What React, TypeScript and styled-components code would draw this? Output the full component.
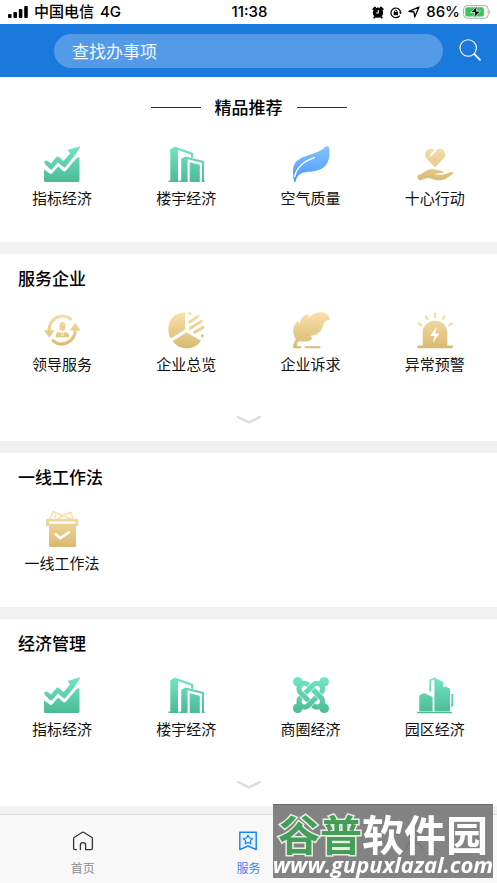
import React, { useId } from "react";
import styled, { createGlobalStyle } from "styled-components";
import { FaJoomla } from "react-icons/fa";

const GlobalStyle = createGlobalStyle`
  * { box-sizing: border-box; }
  body {
    margin: 0;
    background: #f1f1f1;
    color: #000;
    font-family: "Noto Sans CJK SC", sans-serif;
  }
  button, input { font: inherit; }
  button { border: 0; padding: 0; background: none; cursor: pointer; }
`;

const Page = styled.div`
  min-height: 100vh;
  display: flex;
  flex-direction: column;
`;

/* ---------- status bar ---------- */

const StatusBar = styled.div`
  height: 24px;
  padding: 0 6px 0 8px;
  display: grid;
  grid-template-columns: 1fr auto 1fr;
  align-items: center;
  background: #fff;
  font: 500 15px/24px Inter, "Noto Sans CJK SC", sans-serif;
`;

const StatusGroup = styled.div<{ $end?: boolean }>`
  display: flex;
  align-items: center;
  justify-content: ${(p) => (p.$end ? "flex-end" : "flex-start")};
  gap: 6px;
  white-space: nowrap;
`;

const Reading = styled.span`
  display: flex;
  align-items: center;
  gap: 3px;
`;

/* ---------- header ---------- */

const Header = styled.header`
  height: 53px;
  padding: 0 16px 0 54px;
  display: flex;
  align-items: center;
  gap: 16px;
  background: #1a79dc;
`;

const SearchInput = styled.input`
  flex: 1;
  min-width: 0;
  height: 34px;
  padding: 0 18px;
  border: 0;
  border-radius: 17px;
  outline: 0;
  background: #539be7;
  color: #fff;
  font-size: 17px;
  &::placeholder { color: #f1f7fd; opacity: 1; }
`;

const SearchButton = styled.button`
  width: 22px;
  height: 24px;
  color: #fff;
  svg { display: block; }
`;

/* ---------- sections ---------- */

const Main = styled.main`
  flex: 1;
  display: flex;
  flex-direction: column;
  gap: 12px;
`;

const Section = styled.section<{ $featured?: boolean }>`
  padding: ${(p) => (p.$featured ? "18px 0 33px" : "12px 0 33px")};
  background: #fff;
`;

const Title = styled.h2`
  margin: 0;
  padding: 0 18px;
  font-size: 17px;
  line-height: 24px;
  font-weight: 500;
`;

const FeaturedTitle = styled(Title)`
  display: flex;
  justify-content: center;
  align-items: center;
  gap: 14px;
  &::before, &::after {
    content: "";
    width: 50px;
    height: 1px;
    background: #333;
  }
`;

const Grid = styled.div<{ $featured?: boolean }>`
  margin-top: ${(p) => (p.$featured ? "27px" : "22px")};
  display: grid;
  grid-template-columns: repeat(4, 1fr);
`;

const Entry = styled.button`
  display: flex;
  flex-direction: column;
  align-items: center;
  gap: 5px;
  color: #111;
  font-size: 15px;
  line-height: 22px;
`;

const Art = styled.svg`
  width: 36px;
  height: 36px;
  display: block;
  overflow: visible;
`;

const MoreButton = styled.button`
  width: 48px;
  height: 22px;
  margin: 34px auto -23px;
  display: flex;
  align-items: center;
  justify-content: center;
`;

/* ---------- tab bar ---------- */

const TabBar = styled.nav`
  height: 69px;
  margin-top: 8px;
  position: sticky;
  bottom: 0;
  display: grid;
  grid-template-columns: repeat(3, 1fr);
  border-top: 1px solid #d9d9d9;
  background: #f8f8f8;
`;

const Tab = styled.a<{ $active?: boolean }>`
  padding-top: 16px;
  display: flex;
  flex-direction: column;
  align-items: center;
  gap: 8px;
  color: ${(p) => (p.$active ? "#3f83ee" : "#8c8c8c")};
  font-size: 12px;
  line-height: 18px;
  text-decoration: none;
`;

const Watermark = styled.div`
  position: fixed;
  right: 4px;
  bottom: 5px;
  width: 220px;
  height: 74px;
  padding-top: 10px;
  display: flex;
  flex-direction: column;
  align-items: center;
  border-top: 1px solid #6c6c6c;
  background: rgba(122, 122, 122, 0.93);
  color: #fff;
  white-space: nowrap;
  pointer-events: none;
`;

const Brand = styled.div`
  font-size: 42px;
  line-height: 36px;
  font-weight: 700;
`;

const BrandAccent = styled.span`
  color: #459d57;
  -webkit-text-stroke: 3px #e4eee4;
  paint-order: stroke fill;
`;

const Site = styled.div`
  font: italic 700 22px/26px "Open Sans", sans-serif;
`;

/* ---------- icons ---------- */

const tones = {
  green: ["#72e6c5", "#4dba95"],
  gold: ["#fae0ab", "#d7ba70"],
  blue: ["#86c3ff", "#4899fc"],
};
type Tone = keyof typeof tones;

const drawings = {
  chart: (g: string) => (
    <g fill={g}>
      <path d="M.6 17.8Q-.5 16 1.2 14.8Q2.5 14 4 15.2L7 17.6L12.2 11.2Q13.5 9.8 15 11.1L19.6 15L26.2 7.2L24.2 5Q23.5 4 24.8 3.6L35.2.4Q36.5.2 36 1.4L30.2 10.2L21.6 20.8Q20.6 22 19.4 21L14 16.4L8.2 23Q7.2 24 6 23Z" />
      <path d="M0 23.6L5.8 27.6Q7.2 28.4 8.2 27.2L14.2 20.4L19.2 25Q20.6 26.2 21.8 24.8L32.5 12.2Q34.8 10 35.5 12.5V34.5Q35.5 36 34 36H1.5Q0 36 0 34.5Z" />
    </g>
  ),
  towers: (g: string) => (
    <g fill={g}>
      <path d="M2.3 3.2L7 .6L25 7V12L23 11.4V8.6L10 4V34.5H10.8V36H.5V34.5H2.3Z" />
      <path fillRule="evenodd" d="M13.2 12.8L17.5 10.4L36 15V34.5H36.6V36H11.5V34.5H13.2ZM19.6 15V36H21.7V16.2L31.7 18.7V36H34V16.8L19.6 13.2Z" />
      <path d="M22 18L31.5 20.2V23.4L22 21ZM22 23.4L31.5 25.4V28.5L22 26.4ZM22 28.8L31.5 30.2V32.6L22 31.5ZM22 33.5L31.5 34.2V36H22Z" />
    </g>
  ),
  leaf: (g: string) => (
    <>
      <path fill={g} d="M34 .2Q36.5-.2 36.5 5.5C36.8 16 33 22 24 24.6C18 26.3 12 25.5 8 27.6C4 30 3.5 32.5 2.6 35.6Q1.8 36.8 1 35.4C.8 33-.2 29 0 24C.3 17.5 4.5 13.2 11 10.8C17 8.6 27 6 31 2Q32.5.5 34 .2Z" />
      <path d="M1.6 30.5Q5 17 21.5 11.6" fill="none" stroke="#fff" strokeWidth="1.4" strokeLinecap="round" />
    </>
  ),
  heart: (g: string) => (
    <>
      <g fill={g}>
        <path d="M18 21.3L9.8 12.8C7.5 10 7.5 6.4 9.8 4.4C12.4 2.1 15.7 2.4 18 5C20.3 2.4 24 2.1 26.5 4.4C28.8 6.6 28.6 10 26.3 12.8Z" />
        <path d="M.3 29.6Q4 28.5 7.5 25.8Q12 22.2 17 23.3L25 25.1Q26.8 25.8 26.4 27.3L20 27.8Q25.5 29.8 30 27.6Q33.5 25.4 35.8 26.2Q36.8 27 35.5 28.2L28.5 33Q24.5 34.8 19 34C15 33.4 13 31.6 9.5 32.2L3 34.5Q0 33 .3 29.6Z" />
      </g>
      <path d="M13.8 9.2L18.4 4.6" stroke="#fff" strokeWidth="2" strokeLinecap="round" />
      <path d="M18.8 28.2L25.6 27.7" stroke="#fff" strokeWidth="1" strokeLinecap="round" />
    </>
  ),
  leader: (g: string) => (
    <>
      <g fill="none" stroke={g} strokeWidth="3.2">
        <path d="M5 19A13.6 14.2 0 0 1 27.5 7.6" />
        <path d="M31.3 17.5A13.6 14.2 0 0 1 9 28.6" strokeLinecap="round" />
      </g>
      <g fill={g}>
        <path d="M.5 18.4H10L5.3 25.2Z" stroke={g} strokeWidth=".6" strokeLinejoin="round" />
        <path d="M26.4 18.2H35.9L31.1 11.2Z" stroke={g} strokeWidth=".6" strokeLinejoin="round" />
        <ellipse cx="18.3" cy="14.4" rx="3" ry="4.3" />
        <path d="M11.8 25.2V23Q11.8 21 14 20.6L16.2 20L17.4 24H19.2L20.4 20L22.6 20.6Q25 21 25 23V25.2Z" />
        <path d="M17.6 20.2H19L19.2 22.6L18.3 24L17.4 22.6Z" />
      </g>
    </>
  ),
  pie: (g: string) => (
    <>
      <g fill={g}>
        <path d="M17 .3V17.6L2.6 26.4C-2.4 16 .5 1.5 17 .3Z" />
        <path d="M18.5 20.6L33 28.7C26 38.8 11 38.8 4.8 29Z" />
        <circle cx="21.8" cy="1.6" r="1.6" />
        <circle cx="34.3" cy="23.8" r="1.6" />
      </g>
      <path d="M21.6 10L29.8 4.6M22.2 16.2L33.4 9.3M26.6 20.3L35 15.4" stroke={g} strokeWidth="2.9" strokeLinecap="round" />
    </>
  ),
  quill: (g: string) => (
    <g fill={g}>
      <path d="M36.4 6.8C36 2 31-.4 25 .4C21 1 18 3 16 5.8Q16 3.4 14.8 2.2C10 3.5 7 7.6 6.7 11.4Q5.7 10.4 4.8 9.2C1 12.5.2 15.5.2 19C.2 22.5 1.5 25.5 2.8 27.4C1.6 29.5.2 31.5 0 34.6Q-.2 36.2 1.5 36.2H8Q9.3 35.2 8 34.2H4C3.4 32 4.2 30 6.4 29.2C11 29.8 19.5 29.8 18.8 25.5L17.6 23.8C25.5 22.6 28 19.2 29.3 15.2C31 10.5 32.4 7.7 36.4 8.4Z" />
      <rect x="11.5" y="34.2" width="16" height="2" rx="1" />
    </g>
  ),
  siren: (g: string) => (
    <>
      <path fill={g} d="M5.7 33.5V21C5.7 4.8 30.3 4.8 30.3 21V33.5H35Q36 33.5 36 34.8Q36 36.2 35 36.2H1.2Q.2 36.2 .2 34.8Q.2 33.5 1.2 33.5Z" />
      <path d="M18 1.6V5M9 4.6L10.4 7M27.4 4.6L26 7M1.5 11.4L4 13M34.8 11.4L32.2 13" stroke="#f8dda5" strokeWidth="2.4" strokeLinecap="round" />
      <path d="M19.6 14.5L13.2 24H17.4L15.8 31L22.4 21.5H18.5Z" fill="#fff" />
    </>
  ),
  ballot: (g: string) => (
    <>
      <g fill="none" stroke="#f7dda8" strokeWidth="1.5" strokeLinejoin="round">
        <path d="M6 8.4L9 .8L28 8.4M18 4.4L26.8 1.3L29 8" />
        <path d="M10.6 6.8L12 3.6M13.5 8.2L19 4.8" />
      </g>
      <path fill={g} fillRule="evenodd" d="M3 7.8H33Q34.2 7.8 34.2 9V13.8Q34.2 15 33 15H32V34.8Q32 36 30.8 36H6.2Q5 36 5 34.8V15H3.2Q2 15 2 13.8V9Q2 7.8 3 7.8ZM5 10.6V12.8H31.4V10.6Z" />
      <path d="M11.8 23.2L16.2 27.2L24.8 21.4" fill="none" stroke="#fff" strokeWidth="2.6" strokeLinecap="round" strokeLinejoin="round" />
    </>
  ),
  knot: (g: string) => <FaJoomla size={36} preserveAspectRatio="xMidYMid slice" fill={g} />,
  park: (g: string) => (
    <g fill={g}>
      <path d="M2.3 18.3L7 16L15.6 20V34.6H2.3ZM17.4.8L26.2 5V10L29 9.4L33 11.7V34.6H17.4Z" />
      <path d="M0 35H35V36.2H0ZM34.4 17H36.2V29L34.4 30.5Z" />
      <path d="M13.2 14.5V3.2L18.5 1" fill="none" stroke={g} strokeWidth="1.6" />
    </g>
  ),
};
type Drawing = keyof typeof drawings;

function EntryArt({ name, tone }: { name: Drawing; tone: Tone }) {
  const id = useId();
  const [from, to] = tones[tone];
  const local = name === "knot";
  return (
    <Art viewBox="0 0 36 36" aria-hidden="true">
      <defs>
        <linearGradient
          id={id}
          gradientUnits={local ? "objectBoundingBox" : "userSpaceOnUse"}
          x1="0"
          y1="0"
          x2="0"
          y2={local ? 1 : 36}
        >
          <stop stopColor={from} />
          <stop offset="1" stopColor={to} />
        </linearGradient>
      </defs>
      {drawings[name](`url(#${id})`)}
    </Art>
  );
}

const Chevron = () => (
  <svg width="26" height="10" viewBox="0 0 26 10" fill="none" stroke="#dcdcdc" strokeWidth="2.4" strokeLinecap="round" strokeLinejoin="round" aria-hidden="true">
    <path d="M2 2L13 7.4L24 2" />
  </svg>
);

const SignalIcon = () => (
  <svg width="20" height="14" viewBox="0 0 20 14" aria-label="信号">
    <rect x="0" y="9" width="3.6" height="4" rx="1" />
    <rect x="5.4" y="7" width="3.6" height="6" rx="1" />
    <rect x="10.8" y="4" width="3.6" height="9" rx="1" />
    <rect x="16.2" y="1" width="3.6" height="12" rx="1" />
  </svg>
);

const AlarmIcon = () => (
  <svg width="12" height="13" viewBox="0 0 13 14" aria-hidden="true">
    <circle cx="6.5" cy="7.2" r="5.6" />
    <path d="M1.4 3.4L3.4 1.6M11.6 3.4L9.6 1.6M2.4 12.6L3.6 11.4M10.6 12.6L9.4 11.4" stroke="#000" strokeWidth="2" strokeLinecap="round" />
    <path d="M6.8 4.4V7.6H4.4" fill="none" stroke="#fff" strokeWidth="1.1" />
  </svg>
);

const LockIcon = () => (
  <svg width="12" height="13" viewBox="0 0 13 14" fill="none" stroke="#000" aria-hidden="true">
    <path d="M10.6 10.3A5.2 5.2 0 1 1 11.5 7" strokeWidth="1.3" />
    <path d="M9.7 6.6H13L11.4 9Z" fill="#000" stroke="none" />
    <rect x="4" y="6.5" width="4.6" height="3.4" fill="#000" stroke="none" />
    <path d="M4.9 6.6V5.4Q6.3 3.2 7.7 5.4V6.6" />
  </svg>
);

const LocationIcon = () => (
  <svg width="12" height="12" viewBox="0 0 12 12" fill="none" stroke="#000" strokeWidth="1.3" strokeLinejoin="round" aria-hidden="true">
    <path d="M11 1L1 5.4L6 6L6.7 11Z" />
  </svg>
);

const BatteryIcon = () => (
  <svg width="28" height="14" viewBox="0 0 28 14" aria-hidden="true">
    <rect x=".6" y=".6" width="24.6" height="12.6" rx="3.6" fill="#fff" stroke="#aaa" />
    <rect x="2.3" y="2.3" width="18.6" height="9.2" rx="2" fill="#34c759" />
    <path d="M26.4 5Q28.2 6.8 26.4 9Z" fill="#aaa" />
    <path d="M14.6 .8L7.6 7.6H11.8L10.6 13L17.6 6.2H13.2Z" fill="#000" stroke="#fff" strokeWidth=".8" />
  </svg>
);

const SearchIcon = () => (
  <svg width="22" height="24" viewBox="0 0 22 24" fill="none" stroke="currentColor" strokeLinecap="round" aria-hidden="true">
    <circle cx="9.2" cy="9" r="8.2" strokeWidth="1.1" />
    <path d="M15.4 15.2L21 20.8" strokeWidth="1.8" />
  </svg>
);

const HomeIcon = () => (
  <svg width="22" height="20" viewBox="0 0 22 20" fill="none" stroke="#333" strokeWidth="1.3" strokeLinecap="round" strokeLinejoin="round" aria-hidden="true">
    <path d="M4.4 18.6H3Q1.6 18.6 1.6 17.2V7.6Q1.6 6.7 2.4 6.2L10 1.5Q11 .9 12 1.5L19.6 6.2Q20.4 6.7 20.4 7.6V17.2Q20.4 18.6 19 18.6H13.6V14Q13.6 11.6 11 11.6Q8.4 11.6 8.4 14V18.6" />
  </svg>
);

const ServiceIcon = () => (
  <svg width="20" height="20" viewBox="0 0 20 20" fill="none" stroke="#1683e8" strokeWidth="1.4" strokeLinejoin="round" aria-hidden="true">
    <path d="M1.8 1.2H18.2V18.6L10 15L1.8 18.6Z" fill="#e5f1fd" />
    <path d="M10 4.2L11.4 7L14.5 7.5L12.3 9.7L12.8 12.8L10 11.3L7.2 12.8L7.7 9.7L5.5 7.5L8.6 7Z" fill="#fff" strokeWidth="1.2" />
  </svg>
);

const ProfileIcon = () => (
  <svg width="20" height="20" viewBox="0 0 20 20" fill="none" stroke="#333" strokeWidth="1.3" strokeLinecap="round" aria-hidden="true">
    <circle cx="10" cy="5" r="4" />
    <path d="M2 18Q2 11.5 10 11.5Q18 11.5 18 18" />
  </svg>
);

/* ---------- data ---------- */

type Item = [label: string, art: Drawing, tone: Tone];

const sections: { title: string; items: Item[]; more?: boolean; featured?: boolean }[] = [
  {
    title: "精品推荐",
    featured: true,
    items: [
      ["指标经济", "chart", "green"],
      ["楼宇经济", "towers", "green"],
      ["空气质量", "leaf", "blue"],
      ["十心行动", "heart", "gold"],
    ],
  },
  {
    title: "服务企业",
    more: true,
    items: [
      ["领导服务", "leader", "gold"],
      ["企业总览", "pie", "gold"],
      ["企业诉求", "quill", "gold"],
      ["异常预警", "siren", "gold"],
    ],
  },
  { title: "一线工作法", items: [["一线工作法", "ballot", "gold"]] },
  {
    title: "经济管理",
    more: true,
    items: [
      ["指标经济", "chart", "green"],
      ["楼宇经济", "towers", "green"],
      ["商圈经济", "knot", "green"],
      ["园区经济", "park", "green"],
    ],
  },
];

export default function App() {
  return (
    <Page>
      <GlobalStyle />
      <StatusBar>
        <StatusGroup>
          <SignalIcon />
          <span>中国电信</span>
          <span>4G</span>
        </StatusGroup>
        <span>11:38</span>
        <StatusGroup $end>
          <AlarmIcon />
          <LockIcon />
          <LocationIcon />
          <Reading>
            86%
            <BatteryIcon />
          </Reading>
        </StatusGroup>
      </StatusBar>
      <Header>
        <SearchInput type="search" placeholder="查找办事项" aria-label="查找办事项" />
        <SearchButton type="button" aria-label="搜索">
          <SearchIcon />
        </SearchButton>
      </Header>
      <Main>
        {sections.map(({ title, items, more, featured }) => (
          <Section key={title} $featured={featured}>
            {featured ? <FeaturedTitle>{title}</FeaturedTitle> : <Title>{title}</Title>}
            <Grid $featured={featured}>
              {items.map(([label, art, tone]) => (
                <Entry key={label} type="button">
                  <EntryArt name={art} tone={tone} />
                  {label}
                </Entry>
              ))}
            </Grid>
            {more && (
              <MoreButton type="button" aria-label="展开更多">
                <Chevron />
              </MoreButton>
            )}
          </Section>
        ))}
      </Main>
      <TabBar>
        <Tab href="#home">
          <HomeIcon />
          首页
        </Tab>
        <Tab href="#service" $active aria-current="page">
          <ServiceIcon />
          服务
        </Tab>
        <Tab href="#profile" aria-label="我的">
          <ProfileIcon />
        </Tab>
      </TabBar>
      <Watermark>
        <Brand>
          <BrandAccent>谷普</BrandAccent>软件园
        </Brand>
        <Site>www.gupuxlazal.com</Site>
      </Watermark>
    </Page>
  );
}
